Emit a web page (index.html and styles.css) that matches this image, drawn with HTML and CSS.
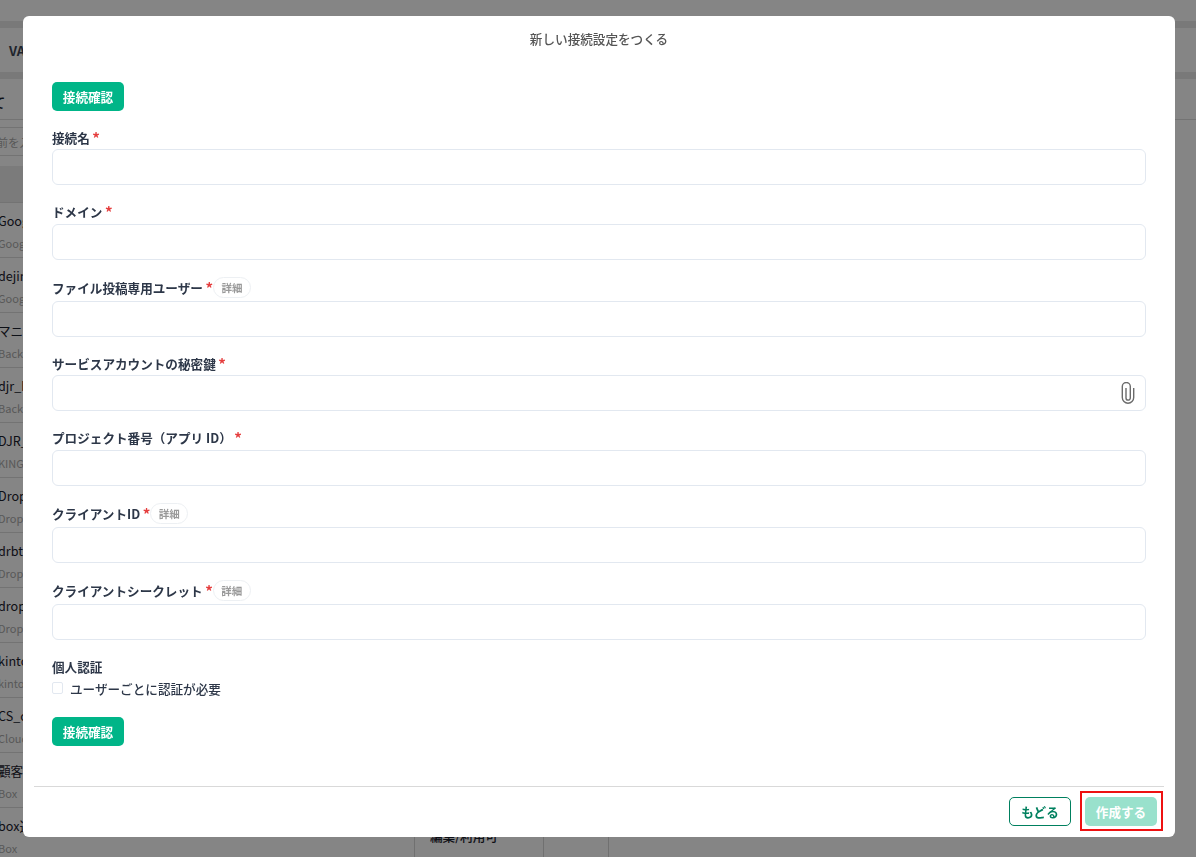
FILE: index.html
```html
<!DOCTYPE html>
<html lang="ja">
<head>
<meta charset="utf-8">
<title>新しい接続設定をつくる</title>
<link rel="stylesheet" href="styles.css">
</head>
<body>
<div class="page">
  <div class="top-gap"></div>
  <div class="band"></div>
  <div class="app-head"><span class="app-name">VALUE</span></div>
  <div class="band"></div>
  <div class="page-title"><span class="page-title-text">すべて</span></div>
  <div class="content">
    <div class="list-panel">
      <div class="search"><span class="search-text">名前を入力</span></div>
      <div class="list-head"></div>
      <div class="row"><div class="row-title">Google連携</div><div class="row-sub">Google Drive</div></div>
      <div class="row"><div class="row-title">dejima</div><div class="row-sub">Google Drive</div></div>
      <div class="row"><div class="row-title">マニュアル</div><div class="row-sub">Backlog</div></div>
      <div class="row"><div class="row-title">djr_backlog</div><div class="row-sub">Backlog</div></div>
      <div class="row"><div class="row-title">DJR_king</div><div class="row-sub">KING</div></div>
      <div class="row"><div class="row-title">Dropbox</div><div class="row-sub">Dropbox</div></div>
      <div class="row"><div class="row-title">drbt</div><div class="row-sub">Dropbox</div></div>
      <div class="row"><div class="row-title">dropbox</div><div class="row-sub">Dropbox</div></div>
      <div class="row"><div class="row-title">kintone</div><div class="row-sub">kintone</div></div>
      <div class="row"><div class="row-title">CS_cloud</div><div class="row-sub">Cloud</div></div>
      <div class="row"><div class="row-title">顧客</div><div class="row-sub">Box</div></div>
      <div class="row"><div class="row-title">box連携</div><div class="row-sub">Box</div></div>
    </div>
    <div class="main-panel">
      <div class="perm-row">
        <div class="perm-cell perm-name">編集/利用可</div>
        <div class="perm-cell perm-more">…</div>
      </div>
    </div>
  </div>
</div>

<div class="overlay">
  <div class="modal">
    <h1 class="modal-title">新しい接続設定をつくる</h1>
    <form class="form">
      <button type="button" class="btn-check btn-check-top">接続確認</button>

      <div class="field">
        <div class="label"><span>接続名</span><span class="req">*</span></div>
        <input class="input" type="text">
      </div>
      <div class="field">
        <div class="label"><span>ドメイン</span><span class="req">*</span></div>
        <input class="input" type="text">
      </div>
      <div class="field">
        <div class="label label-badge"><span>ファイル投稿専用ユーザー</span><span class="req">*</span><span class="badge">詳細</span></div>
        <input class="input" type="text">
      </div>
      <div class="field">
        <div class="label"><span>サービスアカウントの秘密鍵</span><span class="req">*</span></div>
        <div class="input-wrap">
          <input class="input" type="text">
          <svg class="clip" viewBox="0 0 14 22" width="14" height="22" aria-hidden="true"><path d="M12.7 6V15.5a5.7 5.7 0 0 1-11.4 0V4.5a4 4 0 0 1 8 0V16a2.15 2.15 0 0 1-4.3 0V6"/></svg>
        </div>
      </div>
      <div class="field">
        <div class="label"><span>プロジェクト番号（アプリ ID）</span><span class="req">*</span></div>
        <input class="input" type="text">
      </div>
      <div class="field">
        <div class="label label-badge"><span>クライアントID</span><span class="req">*</span><span class="badge">詳細</span></div>
        <input class="input" type="text">
      </div>
      <div class="field">
        <div class="label label-badge"><span>クライアントシークレット</span><span class="req">*</span><span class="badge">詳細</span></div>
        <input class="input" type="text">
      </div>

      <div class="personal">
        <div class="label"><span>個人認証</span></div>
        <label class="check-row"><span class="checkbox"></span><span>ユーザーごとに認証が必要</span></label>
      </div>

      <button type="button" class="btn-check">接続確認</button>
    </form>
    <div class="footer">
      <button type="button" class="btn-back">もどる</button>
      <span class="highlight"><button type="button" class="btn-create" disabled>作成する</button></span>
    </div>
  </div>
</div>
</body>
</html>
```

FILE: styles.css
```css
* { box-sizing: border-box; }
html, body { margin: 0; padding: 0; height: 100%; overflow: hidden; }
body { font-family: "Noto Sans CJK JP", "Noto Sans", sans-serif; background: #fff; color: #1a202c; }

/* Page behind the dialog */
.page { height: 857px; display: flex; flex-direction: column; overflow: hidden; background: #fff; }
.top-gap { height: 21px; flex: none; }
.band { height: 7px; flex: none; background: #e8e8e8; }
.app-head { height: 44px; flex: none; display: flex; align-items: center; padding-left: 9px; }
.app-name { font-size: 13px; font-weight: 700; color: #3c4656; }
.page-title { height: 41px; flex: none; border-bottom: 1px solid #dcdcdc; display: flex; align-items: center; overflow: hidden; padding-top: 6px; }
.page-title-text { font-size: 14px; margin-left: -35px; font-weight: 500; }
.content { flex: 1; display: flex; min-height: 0; }
.list-panel { width: 414px; flex: none; padding-top: 7px; overflow: hidden; }
.search { height: 29px; border-top: 1px solid #dcdcdc; border-bottom: 1px solid #dcdcdc; display: flex; align-items: center; overflow: hidden; }
.search-text { font-size: 11.5px; color: #aaa; margin-left: -15px; }
.list-head { height: 37px; margin-top: 10px; background: #ebebeb; border-bottom: 1px solid #dcdcdc; }
.row { height: 55px; border-bottom: 1px solid #dcdcdc; padding: 8px 0 0 0; margin-left: -2px; }
.row-title { font-size: 12.6px; line-height: 20px; color: #1a202c; white-space: nowrap; }
.row-sub { font-size: 11px; line-height: 18px; margin-top: 3px; color: #aaa; white-space: nowrap; }
.main-panel { flex: 1; display: flex; flex-direction: column; justify-content: flex-end; }
.perm-row { height: 49px; display: flex; }
.perm-cell { border-left: 1px solid #d6d6d6; font-size: 12.6px; }
.perm-name { width: 129px; padding: 19px 0 0 15px; font-weight: 500; color: #1a202c; line-height: 18px; }
.perm-more { width: 66px; padding: 16px 0 0 0; text-align: center; border-right: 1px solid #d6d6d6; color: #888; line-height: 18px; }

/* Dialog */
.overlay { position: fixed; inset: 0; padding: 16px 21px 20px 23px; display: flex; background: rgba(0, 0, 0, .48); }
.modal { flex: 1; display: flex; flex-direction: column; background: #fff; border-radius: 6px; overflow: hidden; }
.modal-title { margin: 0; padding-top: 13px; height: 66px; flex: none; text-align: center; font-size: 12.6px; line-height: 19px; font-weight: 500; color: #555; }
.form { flex: 1; padding: 0 29px; }
.btn-check { display: block; width: 72px; height: 29px; padding: 0; border: 0; border-radius: 5px; background: #00b588; color: #fff; font: 700 12.6px/19px "Noto Sans CJK JP", sans-serif; }
.btn-check-top { margin-bottom: 16.5px; }
.field { margin-bottom: 17px; }
.label { display: flex; align-items: center; font-size: 12.6px; line-height: 19.5px; font-weight: 700; color: #2d3748; margin-bottom: 2px; }
.label-badge { height: 22px; }
.req { color: #e53e3e; margin-left: 2.5px; font-size: 15px; line-height: 19.5px; }
.badge { width: 38px; height: 21px; margin-left: 0; border: 1px solid #edf0f3; border-radius: 11px; font-size: 10.5px; line-height: 19px; font-weight: 700; text-align: center; color: #999; flex: none; }
.input { display: block; width: 100%; height: 36px; padding: 0 12px; background: #fff; border: 1px solid #e2e8f0; border-radius: 6px; outline: none; }
.input-wrap { position: relative; }
.clip { position: absolute; right: 11px; top: 7px; fill: none; stroke: #6b6b6b; stroke-width: 1.4; }
.personal { margin-top: 17px; margin-bottom: 19.5px; }
.check-row { display: flex; align-items: center; gap: 7px; margin-top: 2.5px; font-size: 12.6px; line-height: 19px; font-weight: 500; color: #2d3748; }
.checkbox { width: 11px; height: 12px; border: 1px solid #e2e8f0; border-radius: 2px; background: #fff; }

.footer { flex: none; height: 51px; margin: 0 11px; border-top: 1px solid #d9d9d9; display: flex; justify-content: flex-end; align-items: flex-start; gap: 14px; padding: 10px 7px 0 0; }
.btn-back { width: 62px; height: 29px; padding: 0; background: #fff; border: 1px solid #00805f; border-radius: 5px; color: #00805f; font: 700 12.6px/19px "Noto Sans CJK JP", sans-serif; }
.highlight { position: relative; display: block; height: 29px; }
.highlight::after { content: ""; position: absolute; inset: -6px -6px -5px -5px; border: 2px solid #ee1111; pointer-events: none; }
.btn-create { display: block; width: 72px; height: 29px; padding: 0; border: 0; border-radius: 5px; background: #99e1cc; color: #fff; font: 700 12.6px/19px "Noto Sans CJK JP", sans-serif; }
```
